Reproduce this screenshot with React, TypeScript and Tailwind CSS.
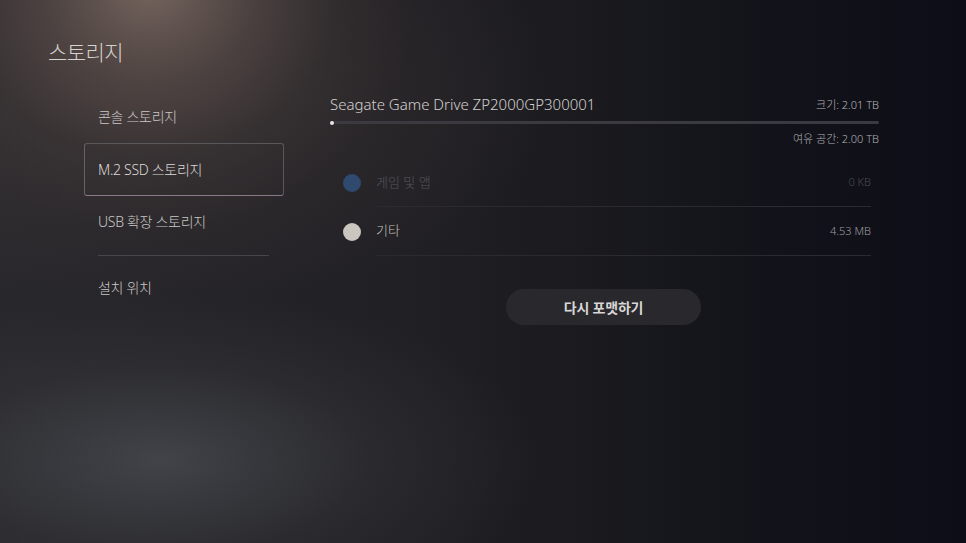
import React from "react";

const font = { fontFamily: '"Noto Sans", "Noto Sans CJK KR", sans-serif' };

export default function App() {
  return (
    <div
      className="relative w-[966px] h-[543px] overflow-hidden bg-[linear-gradient(90deg,#28272b_0%,#201f23_45%,#14151b_75%,#0c0d16_100%)]"
      style={font}
    >
      <div className="absolute inset-0 bg-[radial-gradient(ellipse_270px_240px_at_150px_-10px,rgba(150,128,116,0.75)_0%,rgba(110,92,86,0.45)_40%,rgba(70,60,58,0.2)_70%,rgba(0,0,0,0)_100%)]" />
      <div className="absolute inset-0 bg-[radial-gradient(ellipse_420px_220px_at_140px_90px,rgba(90,76,72,0.35)_0%,rgba(0,0,0,0)_100%)]" />
      <div className="absolute inset-0 bg-[radial-gradient(ellipse_380px_170px_at_160px_460px,rgba(84,88,94,0.6)_0%,rgba(62,64,70,0.3)_55%,rgba(0,0,0,0)_100%)]" />

      <div className="relative flex flex-col">
        <h1 className="ml-[48px] mt-[38px] text-[21px] leading-[28px] font-light text-[#d6d2ce] tracking-[-0.6px]">
          스토리지
        </h1>

        <div className="flex mt-[25px]">
          {/* left menu */}
          <div className="ml-[84px] w-[200px] flex flex-col text-[14px] font-light text-[#c9c7c6] tracking-[-0.3px]">
            <div className="h-[52px] flex items-center pl-[14px] pb-[1px]">콘솔 스토리지</div>
            <div className="h-[53px] flex items-center pl-[13px] rounded-[3px] border-[1.5px] border-[#58575c] border-b-[#8a7a88] border-l-[#6a6068] text-[#dcdad8]">
              M.2 SSD 스토리지
            </div>
            <div className="h-[50px] flex items-center pl-[14px]">USB 확장 스토리지</div>
            <div className="mt-[9px] ml-[14px] mr-[15px] h-px bg-[#46454a]" />
            <div className="h-[62px] flex items-center pl-[14px]">설치 위치</div>
          </div>

          {/* right panel */}
          <div className="ml-[46px] w-[549px] flex flex-col mt-[3px]">
            <div className="flex items-end justify-between">
              <div className="text-[15px] leading-[20px] font-light text-[#d2d0cf]">
                Seagate Game Drive ZP2000GP300001
              </div>
              <div className="text-[11px] leading-[16px] font-light text-[#b8b7b8] mb-[1px]">크기: 2.01 TB</div>
            </div>
            <div className="mt-[7px] h-[3px] rounded-full bg-[#3a3a40] relative">
              <div className="absolute left-0 top-[-0.5px] w-[4px] h-[4px] rounded-full bg-[#e6e6e6]" />
            </div>
            <div className="mt-[7px] self-end text-[11px] leading-[16px] font-light text-[#b0afb0]">여유 공간: 2.00 TB</div>

            <div className="mt-[12px] flex flex-col mr-[8px]">
              <div className="flex items-center h-[48px]">
                <div className="ml-[13px] w-[18px] h-[18px] rounded-full bg-[#2f4a6e]" />
                <div className="ml-[15px] flex-1 h-full flex items-center justify-between border-b border-[#2a2a30]">
                  <span className="text-[13px] font-light text-[#56555a]">게임 및 앱</span>
                  <span className="text-[11px] font-light text-[#4a4a50]">0 KB</span>
                </div>
              </div>
              <div className="flex items-center h-[49px]">
                <div className="ml-[13px] w-[18px] h-[18px] rounded-full bg-[#c9c5bf]" />
                <div className="ml-[15px] flex-1 h-full flex items-center justify-between border-b border-[#2a2a30]">
                  <span className="text-[13px] font-light text-[#c2c0bf]">기타</span>
                  <span className="text-[11px] font-light text-[#9e9da0]">4.53 MB</span>
                </div>
              </div>
            </div>

            <div className="mt-[33px] flex justify-center pr-[2px]">
              <button className="w-[195px] h-[36px] rounded-full bg-[#29292d] text-[14px] font-bold text-[#d8d6d5] tracking-[-0.2px]">
                다시 포맷하기
              </button>
            </div>
          </div>
        </div>
      </div>
    </div>
  );
}
